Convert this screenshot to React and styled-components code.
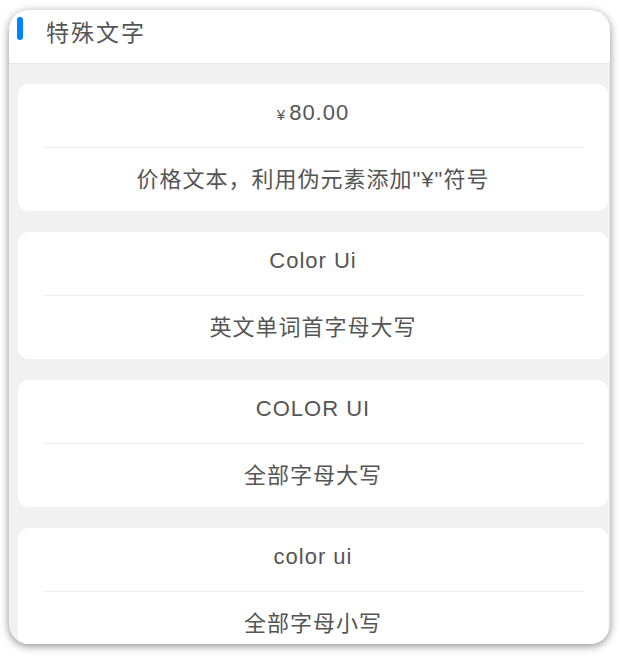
import React from 'react';
import styled, { createGlobalStyle } from 'styled-components';

const GlobalStyle = createGlobalStyle`
  html, body {
    margin: 0;
    padding: 0;
    background: #ffffff;
  }
  body {
    font-family: "Liberation Sans", Arial, "Noto Sans CJK SC", sans-serif;
  }
`;

const items = [
  { top: '¥80.00', bottom: '价格文本，利用伪元素添加"¥"符号', price: true },
  { top: 'color ui', bottom: '英文单词首字母大写', transform: 'capitalize' },
  { top: 'color ui', bottom: '全部字母大写', transform: 'uppercase' },
  { top: 'COLOR UI', bottom: '全部字母小写', transform: 'lowercase' },
];

const App = () => {
  return (
    <Page>
      <GlobalStyle />
      <Frame>
        <Header>
          <Accent />
          <Title>特殊文字</Title>
        </Header>
        <Content>
          {items.map((item, i) => (
            <Card key={i}>
              <Row $transform={item.transform}>
                {item.price ? (
                  <Price>
                    <Yen>¥</Yen>80.00
                  </Price>
                ) : (
                  item.top
                )}
              </Row>
              <Divider />
              <Row>{item.bottom}</Row>
            </Card>
          ))}
        </Content>
      </Frame>
    </Page>
  );
};

export default App;

const Page = styled.div`
  width: 620px;
  height: 656px;
  padding: 10px 10px 0 9px;
  box-sizing: border-box;
`;

const Frame = styled.div`
  width: 601px;
  height: 634px;
  border-radius: 20px;
  overflow: hidden;
  background: #f1f1f1;
  box-shadow: 0 2px 9px rgba(0, 0, 0, 0.45);
`;

const Header = styled.div`
  height: 54px;
  box-sizing: border-box;
  background: #ffffff;
  border-bottom: 1px solid #e6e6e6;
  padding: 7px 0 0 8px;
  display: flex;
  align-items: flex-start;
`;

const Accent = styled.span`
  width: 6px;
  height: 23px;
  border-radius: 3px;
  background: #0081ff;
`;

const Title = styled.span`
  margin-left: 23px;
  margin-top: 1px;
  font-family: "Noto Sans CJK SC", sans-serif;
  font-size: 23px;
  line-height: 26px;
  letter-spacing: 2px;
  color: #555555;
`;

const Content = styled.div`
  padding: 20px 2px 0 9px;
  display: flex;
  flex-direction: column;
  gap: 21px;
`;

const Card = styled.div`
  background: #ffffff;
  border-radius: 10px;
  display: flex;
  flex-direction: column;
`;

const Row = styled.div`
  height: 63px;
  box-sizing: border-box;
  padding-bottom: 5px;
  display: flex;
  align-items: center;
  justify-content: center;
  font-family: "Liberation Sans", Arial, "Noto Sans CJK SC", sans-serif;
  font-size: 22px;
  letter-spacing: 1px;
  color: #555555;
  text-transform: ${({ $transform }) => $transform || 'none'};
`;

const Divider = styled.div`
  height: 1px;
  margin: 0 24px 0 25px;
  background: #eeeeee;
`;

const Price = styled.span`
  display: inline-flex;
  align-items: baseline;
`;

const Yen = styled.span`
  font-size: 15px;
  margin-right: 3px;
`;
